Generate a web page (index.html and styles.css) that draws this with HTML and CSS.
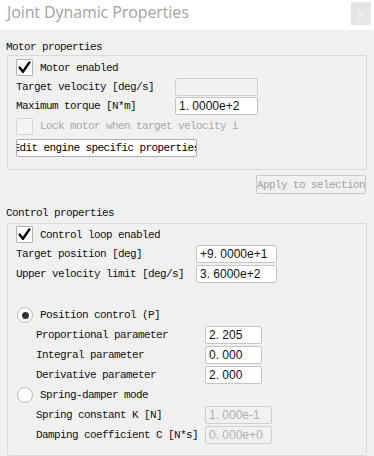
FILE: index.html
```html
<!DOCTYPE html>
<html>
<head>
<meta charset="utf-8">
<link rel="stylesheet" href="styles.css">
</head>
<body>
<div class="window">
  <div class="titlebar">
    <span class="title">Joint Dynamic Properties</span>
    <span class="close">×</span>
  </div>
  <div class="content">
    <div class="section-label">Motor properties</div>
    <div class="group motor">
      <div class="row check-row">
        <span class="checkbox checked"><svg width="15" height="15" viewBox="0 0 15 15"><path d="M2.6 7.6 L5.9 11.8 L12.4 2.4" fill="none" stroke="#000" stroke-width="2.4" stroke-linecap="round" stroke-linejoin="round"/></svg></span>
        <span class="label">Motor enabled</span>
      </div>
      <div class="row">
        <span class="label w160">Target velocity [deg/s]</span>
        <span class="input disabled w82"></span>
      </div>
      <div class="row r20">
        <span class="label w160">Maximum torque [N*m]</span>
        <span class="input w82">1. 0000e+2</span>
      </div>
      <div class="row r20 check-row">
        <span class="checkbox disabled"></span>
        <span class="label muted">Lock motor when target velocity i</span>
      </div>
      <div class="edit-btn"><span>Edit engine specific properties</span></div>
    </div>
    <div class="apply-wrap"><span class="apply-btn">Apply to selection</span></div>
    <div class="section-label second">Control properties</div>
    <div class="group control">
      <div class="row check-row">
        <span class="checkbox checked"><svg width="15" height="15" viewBox="0 0 15 15"><path d="M2.6 7.6 L5.9 11.8 L12.4 2.4" fill="none" stroke="#000" stroke-width="2.4" stroke-linecap="round" stroke-linejoin="round"/></svg></span>
        <span class="label">Control loop enabled</span>
      </div>
      <div class="row r20">
        <span class="label w181">Target position [deg]</span>
        <span class="input w80">+9. 0000e+1</span>
      </div>
      <div class="row r20">
        <span class="label w181">Upper velocity limit [deg/s]</span>
        <span class="input w80">3. 6000e+2</span>
      </div>
      <div class="row r20 radio-row gap-top">
        <span class="radio on"></span>
        <span class="label">Position control (P]</span>
      </div>
      <div class="row r20 sub">
        <span class="label w170">Proportional parameter</span>
        <span class="input w56">2. 205</span>
      </div>
      <div class="row r20 sub">
        <span class="label w170">Integral parameter</span>
        <span class="input w56">0. 000</span>
      </div>
      <div class="row r20 sub">
        <span class="label w170">Derivative parameter</span>
        <span class="input w56">2. 000</span>
      </div>
      <div class="row r20 radio-row">
        <span class="radio"></span>
        <span class="label">Spring-damper mode</span>
      </div>
      <div class="row r20 sub">
        <span class="label w170">Spring constant K [N]</span>
        <span class="input disabled w66">1. 000e-1</span>
      </div>
      <div class="row r20 sub">
        <span class="label w170">Damping coefficient C [N*s]</span>
        <span class="input disabled w66">0. 000e+0</span>
      </div>
    </div>
  </div>
</div>
</body>
</html>
```

FILE: styles.css
```css
html, body {
  margin: 0;
  padding: 0;
}
body {
  width: 374px;
  height: 456px;
  overflow: hidden;
  background: #f0f0f0;
}
.window {
  width: 374px;
  height: 456px;
  display: flex;
  flex-direction: column;
}
.titlebar {
  height: 30px;
  background: #ffffff;
  display: flex;
  align-items: flex-start;
  justify-content: space-between;
  flex-shrink: 0;
}
.title {
  font-family: "Open Sans", "Noto Sans", sans-serif;
  font-size: 16px;
  color: #a3a3a3;
  padding-left: 7px;
  line-height: 25px;
  letter-spacing: -0.1px;
}
.close {
  width: 20px;
  height: 23px;
  margin: 2px 3px 0 0;
  background: #e6e6e6;
  color: #f4f4f4;
  font-family: "DejaVu Sans", sans-serif;
  font-size: 13px;
  display: flex;
  align-items: center;
  justify-content: center;
}
.content {
  flex: 1;
  background: #f0f0f0;
  display: flex;
  flex-direction: column;
  font-family: "Liberation Mono", "DejaVu Sans Mono", monospace;
  font-size: 11px;
  letter-spacing: -0.6px;
  color: #111;
}
.section-label {
  height: 14px;
  line-height: 14px;
  padding-left: 6px;
  margin-top: 10px;
  white-space: nowrap;
}
.section-label.second {
  margin-top: 12px;
}
.group {
  margin: 1px 7px 0 7px;
  border: 1px solid #d9d9d9;
  border-radius: 2px;
  display: flex;
  flex-direction: column;
  padding: 2px 0 12px 8px;
}
.group.control {
  margin-top: 3px;
  padding-top: 1px;
  padding-bottom: 10px;
}
.row {
  height: 19px;
  display: flex;
  align-items: center;
  white-space: nowrap;
}
.row.r20 {
  height: 20px;
}
.row.sub {
  padding-left: 20px;
}
.gap-top {
  margin-top: 21px;
}
.label {
  display: inline-block;
  flex-shrink: 0;
}
.muted {
  color: #a8a8a8;
}
.w160 { width: 160px; }
.w181 { width: 181px; }
.w170 { width: 170px; }
.check-row .label,
.radio-row .label {
  margin-left: 7px;
}
.checkbox {
  width: 15px;
  height: 15px;
  border: 1px solid #b5b5b5;
  background: #ffffff;
  display: flex;
  align-items: center;
  justify-content: center;
  flex-shrink: 0;
  border-radius: 1px;
}
.checkbox.disabled {
  background: #f4f4f4;
  border-color: #d4d4d4;
}
.radio {
  width: 14px;
  height: 14px;
  border: 1px solid #bcbcbc;
  border-radius: 50%;
  background: #ffffff;
  margin-left: 1px;
  display: flex;
  align-items: center;
  justify-content: center;
  flex-shrink: 0;
}
.radio.on::after {
  content: "";
  width: 7px;
  height: 7px;
  border-radius: 50%;
  background: #333333;
}
.input {
  height: 16px;
  border: 1px solid #c4c4c4;
  border-radius: 2px;
  background: #ffffff;
  box-sizing: content-box;
  font-family: "Liberation Sans", "Noto Sans", sans-serif;
  font-size: 12px;
  letter-spacing: 0;
  line-height: 16px;
  padding: 0 0 0 3px;
  color: #111;
  flex-shrink: 0;
  margin-left: -1px;
}
.input.w82 { width: 78px; }
.input.w80 { width: 76px; }
.input.w56 { width: 52px; }
.input.w66 { width: 62px; }
.input.disabled {
  background: #f0f0f0;
  border-color: #cfcfcf;
  color: #b0b0b0;
}
.edit-btn {
  margin-top: 3px;
  width: 179px;
  height: 16px;
  border: 1px solid #adadad;
  border-radius: 2px;
  background: #ffffff;
  display: flex;
  justify-content: center;
  align-items: center;
  overflow: hidden;
  white-space: nowrap;
  color: #000;
}
.edit-btn span {
  flex-shrink: 0;
}
.apply-wrap {
  display: flex;
  justify-content: flex-end;
  padding-right: 8px;
  margin-top: 5px;
}
.apply-btn {
  width: 108px;
  height: 17px;
  border: 1px solid #c9c9c9;
  border-radius: 2px;
  background: #f0f0f0;
  color: #a0a0a0;
  display: flex;
  align-items: center;
  justify-content: center;
  white-space: nowrap;
  overflow: hidden;
}
```
